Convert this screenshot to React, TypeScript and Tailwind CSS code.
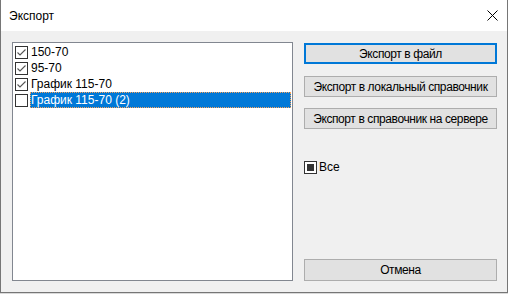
import React from 'react';

const font = { fontFamily: '"Liberation Sans", "Noto Sans", sans-serif' };

function Check({ checked }: { checked: boolean }) {
  return (
    <div className="w-[13px] h-[13px] border border-[#333333] bg-white shrink-0 flex items-center justify-center">
      {checked && (
        <svg width="11" height="11" viewBox="0 0 11 11">
          <path d="M1.5 5.5 L4 8 L9.5 2.5" fill="none" stroke="#555555" strokeWidth="1.1" />
        </svg>
      )}
    </div>
  );
}

const items = [
  { label: '150-70', checked: true },
  { label: '95-70', checked: true },
  { label: 'График 115-70', checked: true },
  { label: 'График 115-70 (2)', checked: false, selected: true },
];

function Btn({ children, focused, h = 'h-[21px]' }: { children: React.ReactNode; focused?: boolean; h?: string }) {
  return (
    <button
      className={`w-full ${h} bg-[#e1e1e1] text-[12px] text-black leading-none whitespace-nowrap tracking-[-0.4px] ${
        focused ? 'border-2 border-[#0078d7]' : 'border border-[#adadad]'
      }`}
    >
      {children}
    </button>
  );
}

export default function App() {
  return (
    <div className="w-[508px] h-[294px] bg-[#d9d9d9] text-[12px]" style={font}>
      <div className="w-[508px] h-[293px] flex flex-col border-x border-b border-[#767676]">
        {/* Title bar */}
        <div className="h-[31px] bg-white flex items-center justify-between pl-[8px] pr-[9px] shrink-0">
          <span className="text-[12px] text-black">Экспорт</span>
          <svg width="11" height="11" viewBox="0 0 11 11">
            <path d="M0.5 0.5 L10.5 10.5 M10.5 0.5 L0.5 10.5" stroke="#000" strokeWidth="1" />
          </svg>
        </div>

        {/* Body */}
        <div className="flex-1 bg-[#f0f0f0] flex pl-[11px] pr-[10px] pt-[11px] pb-[11px]">
          <div className="w-[281px] h-[239px] border border-[#828790] bg-white pt-[1px] pl-[2px] pr-[1px]">
            {items.map((it) => (
              <div key={it.label} className="h-[16px] flex items-center">
                <Check checked={it.checked} />
                <div
                  className={`ml-[2px] flex-1 h-[16px] flex items-center pl-[1px] whitespace-nowrap ${
                    it.selected ? 'bg-[#0078d7] text-white outline-1 outline-dotted outline-[#f7a35c] -outline-offset-1' : 'text-black'
                  }`}
                >
                  {it.label}
                </div>
              </div>
            ))}
          </div>

          <div className="ml-[11px] w-[193px] flex flex-col pt-[1px]">
            <Btn focused>Экспорт в файл</Btn>
            <div className="mt-[12px]">
              <Btn>Экспорт в локальный справочник</Btn>
            </div>
            <div className="mt-[11px]">
              <Btn>Экспорт в справочник на сервере</Btn>
            </div>
            <div className="mt-[29px] flex items-center gap-[2px]">
              <div className="w-[13px] h-[13px] border border-[#333333] bg-white flex items-center justify-center">
                <div className="w-[7px] h-[7px] bg-[#333333]" />
              </div>
              <span className="text-black">Все</span>
            </div>
            <div className="mt-auto">
              <Btn h="h-[22px]">Отмена</Btn>
            </div>
          </div>
        </div>
      </div>
    </div>
  );
}
